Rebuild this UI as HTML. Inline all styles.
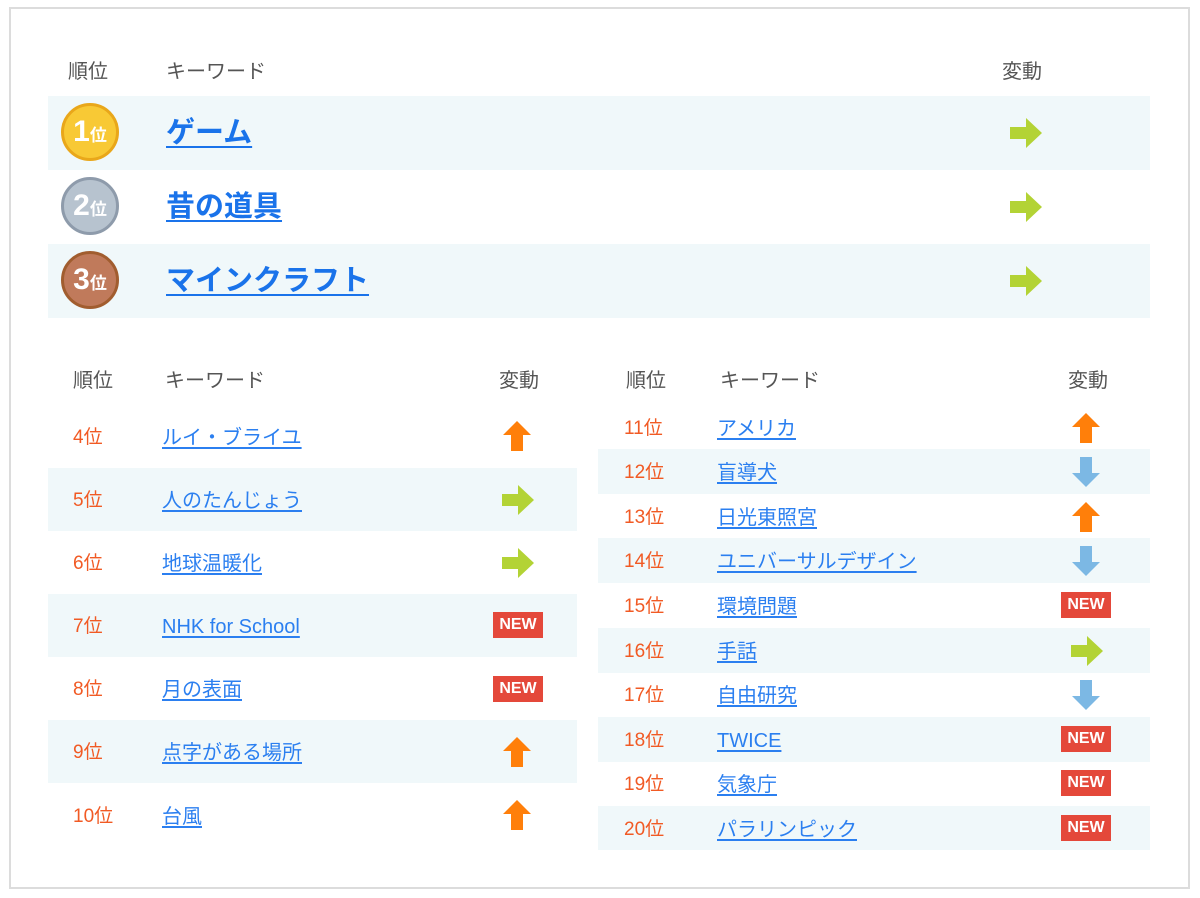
<!DOCTYPE html>
<html><head><meta charset="utf-8"><style>
*{margin:0;padding:0;box-sizing:border-box}
body{width:1200px;height:898px;background:#fff;position:relative;overflow:hidden;font-family:"Liberation Sans","Noto Sans CJK JP",sans-serif}
.frame{position:absolute;left:9px;top:7px;width:1181px;height:882px;border:2px solid #dcdcdc}
.a{position:absolute;white-space:nowrap}
.h{color:#555;font-size:20px;line-height:28px}
.bg{position:absolute;background:#f0f8fa}
.r{color:#f15a24;font-size:19px;line-height:28px}
.k{color:#2b7ff0;font-size:20px;line-height:28px;text-decoration:underline;text-underline-offset:3px}
.kb{color:#1a73ea;font-size:29px;font-weight:bold;line-height:40px;text-decoration:underline;text-underline-offset:4px}
.med{position:absolute;width:58px;height:58px;border-radius:50%;border:3px solid;color:#fff;font-weight:bold;text-align:center;line-height:52px}
.med b{font-size:30px;font-family:"Liberation Sans",sans-serif}
.med i{font-style:normal;font-size:17px}
.new{position:absolute;width:50px;height:26px;background:#e4483a;color:#fff;font-weight:bold;font-size:16px;line-height:26px;text-align:center}
svg{position:absolute}
</style></head><body>
<div class="frame"></div>

<div class="a h" style="left:68px;top:58px">順位</div>
<div class="a h" style="left:166px;top:58px">キーワード</div>
<div class="a h" style="left:1002px;top:58px">変動</div>
<div class="bg" style="left:48px;top:96px;width:1102px;height:74px"></div>
<div class="bg" style="left:48px;top:244px;width:1102px;height:74px"></div>
<div class="med" style="left:61px;top:103px;background:#f8c935;border-color:#e9a71a"><b>1</b><i>位</i></div>
<div class="med" style="left:61px;top:177px;background:#b7c3cf;border-color:#8e9bab"><b>2</b><i>位</i></div>
<div class="med" style="left:61px;top:251px;background:#c07a5b;border-color:#a15d2f"><b>3</b><i>位</i></div>
<div class="a kb" style="left:166px;top:113px">ゲーム</div>
<div class="a kb" style="left:166px;top:187px">昔の道具</div>
<div class="a kb" style="left:166px;top:261px">マインクラフト</div>
<svg style="left:1010px;top:118px" width="32" height="30"><path d="M0 9h16V0l16 15-16 15V21H0z" fill="#b3d335"/></svg>
<svg style="left:1010px;top:192px" width="32" height="30"><path d="M0 9h16V0l16 15-16 15V21H0z" fill="#b3d335"/></svg>
<svg style="left:1010px;top:266px" width="32" height="30"><path d="M0 9h16V0l16 15-16 15V21H0z" fill="#b3d335"/></svg>

<div class="a h" style="left:73px;top:367px">順位</div>
<div class="a h" style="left:165px;top:367px">キーワード</div>
<div class="a h" style="left:499px;top:367px">変動</div>
<div class="bg" style="left:48px;top:468px;width:529px;height:63px"></div>
<div class="bg" style="left:48px;top:594px;width:529px;height:63px"></div>
<div class="bg" style="left:48px;top:720px;width:529px;height:63px"></div>

<div class="a r" style="left:73px;top:424px">4位</div><div class="a k" style="left:162px;top:424px">ルイ・ブライユ</div>
<svg style="left:503px;top:421px" width="28" height="30"><path d="M14 0l14 14h-8v16H8V14H0z" fill="#ff7f0a"/></svg>
<div class="a r" style="left:73px;top:487px">5位</div><div class="a k" style="left:162px;top:487px">人のたんじょう</div>
<svg style="left:502px;top:485px" width="32" height="30"><path d="M0 9h16V0l16 15-16 15V21H0z" fill="#b3d335"/></svg>
<div class="a r" style="left:73px;top:550px">6位</div><div class="a k" style="left:162px;top:550px">地球温暖化</div>
<svg style="left:502px;top:548px" width="32" height="30"><path d="M0 9h16V0l16 15-16 15V21H0z" fill="#b3d335"/></svg>
<div class="a r" style="left:73px;top:613px">7位</div><div class="a k" style="left:162px;top:613px">NHK for School</div>
<div class="new" style="left:493px;top:612px">NEW</div>
<div class="a r" style="left:73px;top:676px">8位</div><div class="a k" style="left:162px;top:676px">月の表面</div>
<div class="new" style="left:493px;top:676px">NEW</div>
<div class="a r" style="left:73px;top:739px">9位</div><div class="a k" style="left:162px;top:739px">点字がある場所</div>
<svg style="left:503px;top:737px" width="28" height="30"><path d="M14 0l14 14h-8v16H8V14H0z" fill="#ff7f0a"/></svg>
<div class="a r" style="left:73px;top:803px">10位</div><div class="a k" style="left:162px;top:803px">台風</div>
<svg style="left:503px;top:800px" width="28" height="30"><path d="M14 0l14 14h-8v16H8V14H0z" fill="#ff7f0a"/></svg>

<div class="a h" style="left:626px;top:367px">順位</div>
<div class="a h" style="left:720px;top:367px">キーワード</div>
<div class="a h" style="left:1068px;top:367px">変動</div>
<div class="bg" style="left:598px;top:449px;width:552px;height:45px"></div>
<div class="bg" style="left:598px;top:538px;width:552px;height:45px"></div>
<div class="bg" style="left:598px;top:628px;width:552px;height:45px"></div>
<div class="bg" style="left:598px;top:717px;width:552px;height:45px"></div>
<div class="bg" style="left:598px;top:806px;width:552px;height:44px"></div>

<div class="a r" style="left:624px;top:415px">11位</div><div class="a k" style="left:717px;top:415px">アメリカ</div>
<svg style="left:1072px;top:413px" width="28" height="30"><path d="M14 0l14 14h-8v16H8V14H0z" fill="#ff7f0a"/></svg>
<div class="a r" style="left:624px;top:459px">12位</div><div class="a k" style="left:717px;top:459px">盲導犬</div>
<svg style="left:1072px;top:457px" width="28" height="30"><path d="M8 0h12v16h8L14 30 0 16h8z" fill="#7cb8e4"/></svg>
<div class="a r" style="left:624px;top:504px">13位</div><div class="a k" style="left:717px;top:504px">日光東照宮</div>
<svg style="left:1072px;top:502px" width="28" height="30"><path d="M14 0l14 14h-8v16H8V14H0z" fill="#ff7f0a"/></svg>
<div class="a r" style="left:624px;top:548px">14位</div><div class="a k" style="left:717px;top:548px">ユニバーサルデザイン</div>
<svg style="left:1072px;top:546px" width="28" height="30"><path d="M8 0h12v16h8L14 30 0 16h8z" fill="#7cb8e4"/></svg>
<div class="a r" style="left:624px;top:593px">15位</div><div class="a k" style="left:717px;top:593px">環境問題</div>
<div class="new" style="left:1061px;top:592px">NEW</div>
<div class="a r" style="left:624px;top:638px">16位</div><div class="a k" style="left:717px;top:638px">手話</div>
<svg style="left:1071px;top:636px" width="32" height="30"><path d="M0 9h16V0l16 15-16 15V21H0z" fill="#b3d335"/></svg>
<div class="a r" style="left:624px;top:682px">17位</div><div class="a k" style="left:717px;top:682px">自由研究</div>
<svg style="left:1072px;top:680px" width="28" height="30"><path d="M8 0h12v16h8L14 30 0 16h8z" fill="#7cb8e4"/></svg>
<div class="a r" style="left:624px;top:727px">18位</div><div class="a k" style="left:717px;top:727px">TWICE</div>
<div class="new" style="left:1061px;top:726px">NEW</div>
<div class="a r" style="left:624px;top:771px">19位</div><div class="a k" style="left:717px;top:771px">気象庁</div>
<div class="new" style="left:1061px;top:770px">NEW</div>
<div class="a r" style="left:624px;top:816px">20位</div><div class="a k" style="left:717px;top:816px">パラリンピック</div>
<div class="new" style="left:1061px;top:815px">NEW</div>
</body></html>
